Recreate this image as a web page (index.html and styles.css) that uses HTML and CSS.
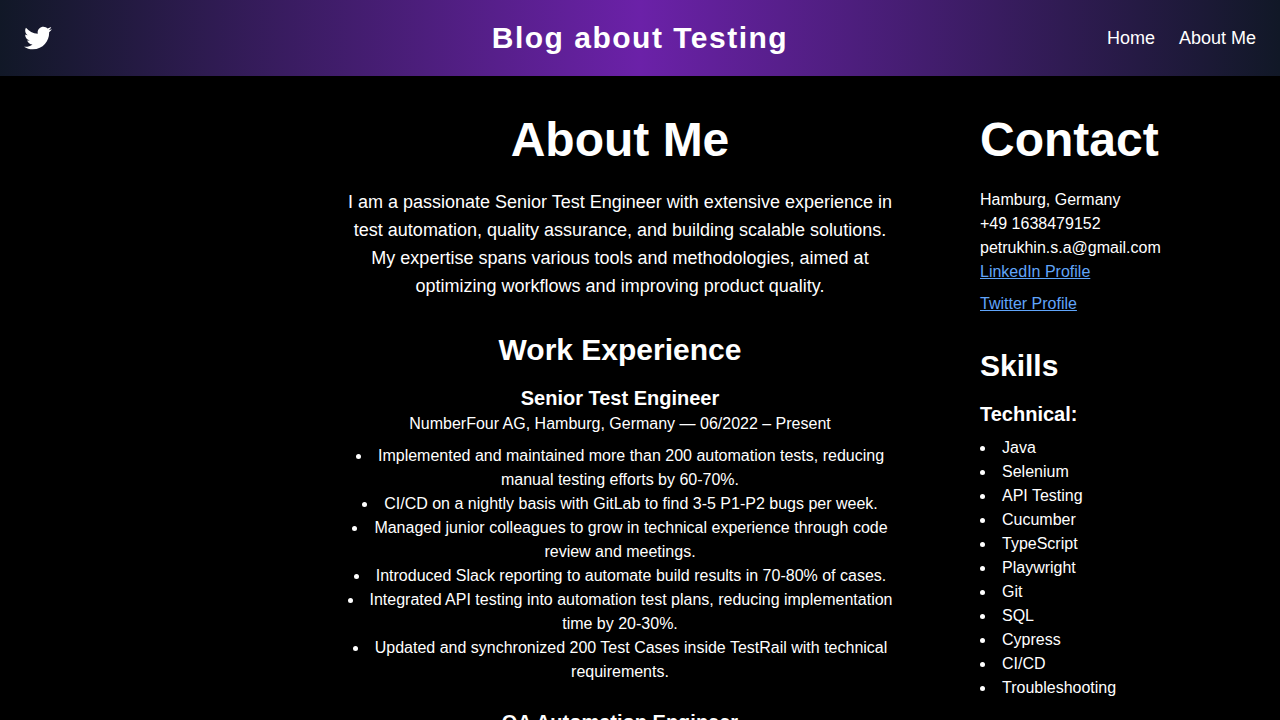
FILE: index.html
```html
<!DOCTYPE html>
<html lang="en">
<head>
<meta charset="utf-8">
<meta name="viewport" content="width=device-width, initial-scale=1">
<title>Blog about Testing</title>
<link rel="stylesheet" href="styles.css">
</head>
<body>
<header class="site-header">
  <a class="social" href="#" aria-label="Twitter">
    <svg class="social-icon" viewBox="0 0 512 512" fill="currentColor" aria-hidden="true"><path d="M459.37 151.716c.325 4.548.325 9.097.325 13.645 0 138.72-105.583 298.558-298.558 298.558-59.452 0-114.68-17.219-161.137-47.106 8.447.974 16.568 1.299 25.34 1.299 49.055 0 94.213-16.568 130.274-44.832-46.132-.975-84.792-31.188-98.112-72.772 6.498.974 12.995 1.624 19.818 1.624 9.421 0 18.843-1.3 27.614-3.573-48.081-9.747-84.143-51.98-84.143-102.985v-1.299c13.969 7.797 30.214 12.67 47.431 13.319-28.264-18.843-46.781-51.005-46.781-87.391 0-19.492 5.197-37.36 14.294-52.954 51.655 63.675 129.3 105.258 216.365 109.807-1.624-7.797-2.599-15.918-2.599-24.04 0-57.828 46.782-104.934 104.934-104.934 30.213 0 57.502 12.67 76.67 33.137 23.715-4.548 46.456-13.32 66.599-25.34-7.798 24.366-24.366 44.833-46.132 57.827 21.117-2.273 41.584-8.122 60.426-16.243-14.292 20.791-32.161 39.308-52.628 54.253z"/></svg>
  </a>
  <p class="site-title">Blog about Testing</p>
  <nav class="site-nav">
    <a href="#">Home</a>
    <a href="#">About Me</a>
  </nav>
</header>
<div class="layout">
  <main class="main">
    <h1 class="page-title">About Me</h1>
    <p class="intro">I am a passionate Senior Test Engineer with extensive experience in test automation, quality assurance, and building scalable solutions. My expertise spans various tools and methodologies, aimed at optimizing workflows and improving product quality.</p>
    <section class="section">
      <h2 class="section-title">Work Experience</h2>
      <article class="job">
        <h3 class="subtitle">Senior Test Engineer</h3>
        <p>NumberFour AG, Hamburg, Germany — 06/2022 – Present</p>
        <ul class="list">
          <li>Implemented and maintained more than 200 automation tests, reducing manual testing efforts by 60-70%.</li>
          <li>CI/CD on a nightly basis with GitLab to find 3-5 P1-P2 bugs per week.</li>
          <li>Managed junior colleagues to grow in technical experience through code review and meetings.</li>
          <li>Introduced Slack reporting to automate build results in 70-80% of cases.</li>
          <li>Integrated API testing into automation test plans, reducing implementation time by 20-30%.</li>
          <li>Updated and synchronized 200 Test Cases inside TestRail with technical requirements.</li>
        </ul>
      </article>
      <article class="job">
        <h3 class="subtitle">QA Automation Engineer</h3>
      </article>
    </section>
  </main>
  <aside class="sidebar">
    <h2 class="page-title">Contact</h2>
    <address class="contact">
      <p>Hamburg, Germany</p>
      <p>+49 1638479152</p>
      <p>petrukhin.s.a@gmail.com</p>
      <p><a class="link" href="#">LinkedIn Profile</a></p>
      <p class="contact-extra"><a class="link" href="#">Twitter Profile</a></p>
    </address>
    <section class="section">
      <h2 class="section-title">Skills</h2>
      <h3 class="subtitle">Technical:</h3>
      <ul class="list">
        <li>Java</li>
        <li>Selenium</li>
        <li>API Testing</li>
        <li>Cucumber</li>
        <li>TypeScript</li>
        <li>Playwright</li>
        <li>Git</li>
        <li>SQL</li>
        <li>Cypress</li>
        <li>CI/CD</li>
        <li>Troubleshooting</li>
      </ul>
    </section>
  </aside>
</div>
</body>
</html>
```
FILE: styles.css
```css
*, *::before, *::after {
  box-sizing: border-box;
}

html {
  scrollbar-width: none;
}

body {
  margin: 0;
  background: #000;
  color: #fff;
  font-family: "Liberation Sans", Arial, sans-serif;
  font-size: 16px;
  line-height: 24px;
}

h1, h2, h3, p, ul {
  margin: 0;
}

.site-header {
  display: grid;
  grid-template-columns: 1fr auto 1fr;
  align-items: center;
  padding: 20px 24px;
  background: linear-gradient(to right, #111827, #6b21a8, #111827);
}

.social {
  justify-self: start;
  display: flex;
  color: #fff;
}

.social-icon {
  width: 28px;
  height: 28px;
}

.site-title {
  font-size: 30px;
  line-height: 36px;
  font-weight: 700;
  letter-spacing: 1.5px;
}

.site-nav {
  justify-self: end;
  display: flex;
  gap: 24px;
  font-size: 18px;
  line-height: 28px;
}

.site-nav a {
  color: #fff;
  text-decoration: none;
}

.layout {
  display: grid;
  grid-template-columns: 6fr 14fr 7fr;
  gap: 80px;
  padding: 40px 20px;
}

.main {
  grid-column: 2;
  text-align: center;
}

.page-title {
  margin-bottom: 24px;
  font-size: 48px;
  line-height: 48px;
}

.intro {
  font-size: 18px;
  line-height: 28px;
}

.section {
  margin-top: 32px;
}

.section-title {
  margin-bottom: 16px;
  font-size: 30px;
  line-height: 36px;
}

.subtitle {
  font-size: 20px;
  line-height: 28px;
}

.job + .job {
  margin-top: 24px;
}

.list {
  margin-top: 8px;
  padding: 0;
  list-style: disc inside;
}

.contact {
  font-style: normal;
}

.contact-extra {
  margin-top: 8px;
}

.link {
  color: #60a5fa;
}
```
